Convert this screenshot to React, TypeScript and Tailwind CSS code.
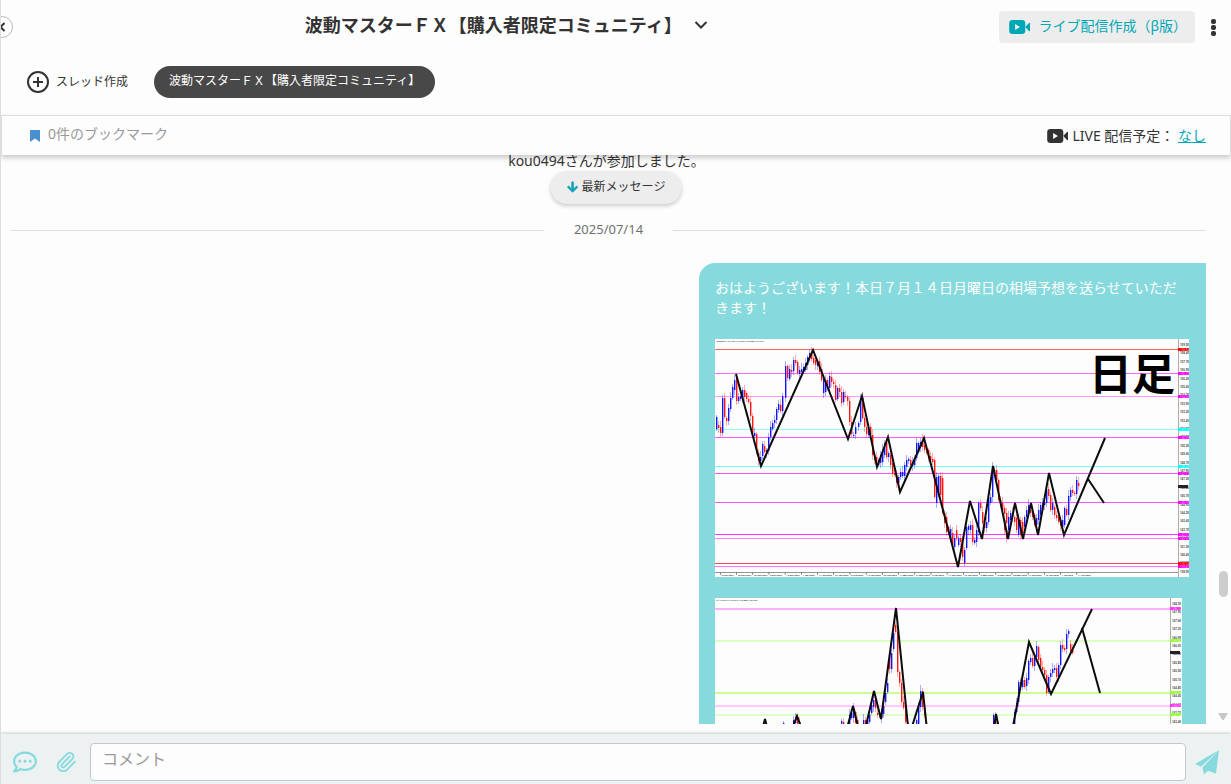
import React from "react";
import { Paperclip } from "lucide-react";
import { FaArrowDown, FaRegCommentDots } from "react-icons/fa";

type Candle = { x: number; up: boolean; top: number; bottom: number };
type Level = { y: number; color: string; tag: string };

// "b78-90" = 陽線 (青), "r86-89" = 陰線 (赤)
const parseCandles = (startX: number, data: string): Candle[] =>
  data
    .trim()
    .split(/\s+/)
    .map((item, i) => {
      const [top, bottom] = item.slice(1).split("-").map(Number);
      return { x: startX + i * 2, up: item[0] === "b", top, bottom };
    });

const dailyCandles = [
  ...parseCandles(
    1,
    `b78-90 r86-89 r88-94 b59-94 r59-78 r79-82 b69-82 b59-70 b48-59 b41-51 r39-62 b58-62
    b57-60 b51-59 r51-58 r54-60 r60-63 r63-77 r77-94 b94-97 r95-114 r114-122 b118-122 b105-117
    r107-113 b111-114 b98-112 b88-98 b84-90 b81-84 b70-81 b65-71 r66-72 b57-72`
  ),
  ...parseCandles(
    70,
    `b27-59 r27-39 b30-40 r31-33 b21-32 r21-24 r23-34 b31-35 b30-33 b28-32 b24-31 b18-26
    b14-19 r14-20 r19-24 r21-26 b22-27 r22-33 r30-41 b40-54 b41-53 r41-49 b37-49 r38-43
    r43-45 r46-61 b49-60 r49-53 r53-64 b53-63 r57-58 r58-62 r62-83 r83-95 b96-97 b88-95`
  ),
  ...parseCandles(
    143,
    `b84-88 b59-83 r59-79 r79-88 r88-95 b91-96 r88-96 r96-116 r116-121 r118-126 b121-126 b116-124
    b111-123 b104-116 r103-118 b114-118 r116-126 r124-135 r134-136 r136-144 b138-144 b133-138
    b133-137 b126-137 b121-128 b120-122 r121-126 b124-127 b119-126 b104-119 b104-113 b103-108
    r101-108 r106-111 r111-114 r111-118 r117-121 r120-123`
  ),
  ...parseCandles(
    219,
    `r121-158 b138-164 b137-154 r137-156 r139-174 r174-184 r178-193 r188-193 b190-201 r194-206
    b199-208 r191-199 b199-206 r199-203 r203-218 b211-224 b188-209 b187-191 b186-191 r186-203
    b201-204 b191-203 b164-193 r164-169 r173-184 r184-189 b183-189 b159-183 b158-164 b129-158
    r131-134 r131-141 r141-161 r161-164 r164-171 r169-175 r174-184`
  ),
  ...parseCandles(
    289,
    `r181-191 r191-199 b178-191 b174-181 r173-178 r178-183 r179-191 b181-196 r181-196 r183-194
    b178-188 b171-178 b166-173 r171-174 r174-178 r176-186 b179-186 b171-181 b166-176 b164-171
    b163-166 b151-164 r150-157 r156-171 b164-171 r168-176 r176-179 r178-183 r181-187 b181-188
    b169-186 r170-176 b157-176 b151-158 r151-154 r154-155 b141-155 r144-147`
  ),
];

const hourlyCandles = [
  ...parseCandles(68, `b125-130`),
  ...parseCandles(78, `b122-130 b121-125 r119-126 r124-130`),
  ...parseCandles(126, `b123-130 r124-130`),
  ...parseCandles(134, `b117-126 b115-120 b110-120 r114-125 r122-130`),
  ...parseCandles(
    148,
    `b122-128 r122-130 b122-130 b117-124 b107-115 b102-109 r102-110 r115-117 r115-118 b115-120
    b108-116 b95-104 b85-94 r55-71 b55-71 b35-51 r27-34 r34-74 r74-85 r85-104 r104-110 r110-124
    r124-130`
  ),
  ...parseCandles(201, `b122-130 b108-126 b93-109 r93-109 r109-117`),
  ...parseCandles(278, `b117-130 r118-130 r124-130`),
  ...parseCandles(
    299,
    `b114-130 b105-114 b84-104 r84-89 b82-89 r82-89 b80-88 b63-82 b60-64 r60-68 b59-68 b48-59
    r49-62 r60-69 r69-72 r72-77 r77-95 b79-94 b75-79 b71-75 b70-72 r70-79 b67-79 b47-67 r47-51
    r50-52 b36-51 b33-36 r46-53 r52-55`
  ),
];

const dailyLevels: Level[] = [
  { y: 10, color: "#ff6666", tag: "#ff0000" },
  { y: 34, color: "#ff66ff", tag: "#ff00ff" },
  { y: 57, color: "#ff99ff", tag: "#ff00ff" },
  { y: 90, color: "#90ffff", tag: "#00ffff" },
  { y: 98, color: "#ff55ff", tag: "#ff00ff" },
  { y: 127, color: "#70ffff", tag: "#00ffff" },
  { y: 134, color: "#ff55ff", tag: "#ff00ff" },
  { y: 163, color: "#ff55ff", tag: "#ff00ff" },
  { y: 195, color: "#ff33ff", tag: "#ff00ff" },
  { y: 199, color: "#ff80ff", tag: "#ff00ff" },
  { y: 224, color: "#ff4455", tag: "#ff0000" },
  { y: 227, color: "#ff70ff", tag: "#ff00ff" },
];

const hourlyLevels: Level[] = [
  { y: 10, color: "#ffb0ff", tag: "#ff30ff" },
  { y: 42, color: "#dcffc0", tag: "#90ff30" },
  { y: 94, color: "#c8ff90", tag: "#90ff30" },
  { y: 107, color: "#ffc8ff", tag: "#ff30ff" },
  { y: 116, color: "#dcffc8", tag: "#90ff30" },
];

const dailyDates = [
  "6 Nov 2024", "18 Nov 2024", "27 Nov 2024", "6 Dec 2024", "19 Dec 2024", "1 Jan 2025",
  "14 Jan 2025", "24 Jan 2025", "5 Feb 2025", "17 Feb 2025", "27 Feb 2025", "11 Mar 2025",
  "21 Mar 2025", "2 Apr 2025", "14 Apr 2025", "24 Apr 2025", "6 May 2025", "16 May 2025",
  "28 May 2025", "9 Jun 2025", "19 Jun 2025", "1 Jul 2025", "11 Jul 2025",
];

interface ChartProps {
  label: string;
  header: string;
  width: number;
  height: number;
  axisX: number;
  currentY: number;
  firstPrice: number;
  priceStep: number;
  levelHeight: number;
  levels: Level[];
  candles: Candle[];
  waves: string[];
  dates?: string[];
  title?: string;
}

function Chart(props: ChartProps) {
  const { width, height, axisX } = props;
  const prices = Array.from({ length: Math.floor((height - 6) / 8.4) + 1 }, (_, i) => i);

  return (
    <svg
      role="img"
      aria-label={props.label}
      width={width}
      height={height}
      viewBox={`0 0 ${width} ${height}`}
      className="block max-w-full bg-[#fdfdfd] font-[Roboto,sans-serif]"
    >
      <text x="1" y="3" fontSize="2.4" fontWeight="700" fill="#444">
        {props.header}
      </text>
      {props.levels.map((l) => (
        <rect key={l.y} x="0" y={l.y} width={axisX} height={props.levelHeight} fill={l.color} />
      ))}
      {props.candles.map((c, i) => (
        <g key={i} fill={c.up ? "#1414ff" : "#ff1414"}>
          <rect
            x={c.x}
            y={c.top - 2 - ((i * 7) % 5)}
            width="1"
            height={c.bottom - c.top + 4 + ((i * 7) % 5) + ((i * 3) % 4)}
            opacity="0.35"
          />
          <rect x={c.x} y={c.top} width="1.4" height={Math.max(c.bottom - c.top, 1)} />
        </g>
      ))}
      {props.waves.map((w) => (
        <polyline key={w} points={w} fill="none" stroke="#0c0c0c" strokeWidth="2" />
      ))}
      <rect x={axisX} y="0" width="0.6" height={height} fill="#777" />
      {prices.map((i) => (
        <text key={i} x={axisX + 2} y={7 + i * 8.4} fontSize="2.8" fontWeight="700" fill="#444">
          {(props.firstPrice - i * props.priceStep).toFixed(2)}
        </text>
      ))}
      {props.levels.map((l) => (
        <g key={l.y}>
          <rect x={axisX} y={l.y - 1} width="11" height="3" fill={l.tag} />
          <text x={axisX + 2} y={l.y + 2} fontSize="3" fill="#fff" fillOpacity="0.5">
            {(props.firstPrice - ((l.y - 6) / 8.4) * props.priceStep).toFixed(2)}
          </text>
        </g>
      ))}
      <rect x={axisX} y={props.currentY} width="10" height="3" fill="#222" />
      {props.dates && (
        <>
          <rect x="0" y="233" width={axisX} height="0.7" fill="#666" />
          {props.dates.map((d, i) => (
            <g key={d}>
              <rect x={5 + i * 16.2} y="233" width="0.7" height="3" fill="#666" />
              <text x={6.5 + i * 16.2} y="237" fontSize="2.4" fontWeight="700" fill="#333">
                {d}
              </text>
            </g>
          ))}
        </>
      )}
      {props.title && (
        <text
          x="374"
          y="51"
          fontSize="43"
          fontWeight="700"
          className="font-['Noto_Sans_CJK_JP',sans-serif]"
        >
          {props.title}
        </text>
      )}
    </svg>
  );
}

function VideoIcon() {
  return (
    <svg width="21" height="16" viewBox="0 0 21 16" fill="currentColor" aria-hidden="true">
      <path
        fillRule="evenodd"
        d="M3.500 1h9.500a3.300 3.300 0 0 1 3.300 3.300v7.400a3.300 3.300 0 0 1-3.300 3.300H3.500A3.300 3.300 0 0 1 .2 11.700V4.300A3.300 3.300 0 0 1 3.500 1Zm2.600 4v6L11 8Z"
      />
      <path d="M16.900 7.200 20 4q1-.7 1 .4v7.200q0 1.100-1 .4l-3.100-3.200Z" />
    </svg>
  );
}

export default function App() {
  const [comment, setComment] = React.useState("");

  return (
    <div className="relative flex h-screen flex-col overflow-hidden border-l border-[#dddddd] bg-[#fdfdfd] font-['Noto_Sans','Noto_Sans_CJK_JP',sans-serif] text-[#333333]">
      <button
        type="button"
        aria-label="戻る"
        className="absolute top-4 -left-2.5 flex size-[22px] items-center justify-end rounded-full border border-[#bbbbbb] bg-[#fdfdfd] pr-1.5"
      >
        <svg width="8" height="10" viewBox="0 0 8 10" fill="none" stroke="currentColor" strokeWidth="2">
          <path d="M6.500 1 2.500 5l4 4" />
        </svg>
      </button>

      <header className="shrink-0 pt-[11px] pb-[17px]">
        <div className="flex h-8 items-center">
          <button
            type="button"
            className="flex flex-1 items-center justify-center gap-3 pb-1 pl-3 text-lg leading-7 font-bold whitespace-nowrap"
          >
            波動マスターＦＸ【購入者限定コミュニティ】
            <svg width="14" height="10" viewBox="0 0 14 10" fill="none" stroke="currentColor" strokeWidth="2">
              <path d="m1.500 2 5.500 5.500L12.500 2" />
            </svg>
          </button>
          <button
            type="button"
            className="flex h-8 items-center gap-2 rounded bg-[#ededed] pr-2 pl-2.5 text-sm whitespace-nowrap text-[#00a8b5]"
          >
            <VideoIcon />
            <span className="pb-0.5">ライブ配信作成（β版）</span>
          </button>
          <button type="button" aria-label="メニュー" className="mr-[11px] ml-3 px-1">
            <svg width="5" height="17" viewBox="0 0 5 17" fill="currentColor">
              <rect x="0" y="0" width="5" height="5" rx="2" />
              <rect x="0" y="6" width="5" height="5" rx="2" />
              <rect x="0" y="12" width="5" height="5" rx="2" />
            </svg>
          </button>
        </div>
        <div className="mt-[23px] flex h-8 items-center pl-[26px] text-xs whitespace-nowrap">
          <button type="button" className="flex items-center gap-[7px]">
            <svg width="22" height="22" viewBox="0 0 22 22" fill="none" stroke="currentColor" strokeWidth="2">
              <circle cx="11" cy="11" r="10" />
              <path d="M11 6v10M6 11h10" />
            </svg>
            スレッド作成
          </button>
          <button
            type="button"
            className="ml-[26px] h-8 rounded-full bg-[#484848] px-[15px] pb-0.5 text-white"
          >
            波動マスターＦＸ【購入者限定コミュニティ】
          </button>
        </div>
      </header>

      <div className="relative z-10 flex h-10 shrink-0 items-center justify-between border border-b-0 border-[#dddddd] bg-[#fdfdfd] pr-6 pl-7 text-sm shadow-[0_3px_5px_rgba(0,0,0,0.2)]">
        <button type="button" className="flex items-center gap-2 text-[#999999]">
          <svg width="10" height="12" viewBox="0 0 10 12" fill="#4a90cf" aria-hidden="true">
            <path d="M0 0h10v12L5 8.500 0 12Z" />
          </svg>
          <span className="pb-1">0件のブックマーク</span>
        </button>
        <p className="flex items-center gap-1">
          <VideoIcon />
          <span>
            LIVE 配信予定：{" "}
            <a href="#live" className="text-[#00a8b5] underline">
              なし
            </a>
          </span>
        </p>
      </div>

      <main className="relative flex min-h-0 flex-1 flex-col">
        <div className="min-h-0 flex-1 overflow-y-auto pr-[25px] pl-2.5 [scrollbar-width:none]">
          <p className="pr-1 text-center text-sm leading-3">kou0494さんが参加しました。</p>
          <div className="mt-[52px] flex items-center text-[13px] leading-5 text-[#707070]">
            <span className="h-px flex-1 bg-[#dddddd]" />
            <time dateTime="2025-07-14" className="px-[30px] pb-0.5">
              2025/07/14
            </time>
            <span className="h-px flex-1 bg-[#dddddd]" />
          </div>

          <article className="mt-[22px] ml-auto w-[507px] max-w-full rounded-tl-2xl bg-[#86dadd] px-4 pt-[15px] pb-4">
            <p className="text-sm leading-5 text-white">
              おはようございます！本日７月１４日月曜日の相場予想を送らせていただきます！
            </p>
            <div className="mt-[21px]">
              <Chart
                label="日足チャート"
                header="Jpy,Daily 147.425 147.575 146.858 147.212"
                width={474}
                height={238}
                axisX={463}
                currentY={146}
                firstPrice={159.2}
                priceStep={0.75}
                levelHeight={1}
                levels={dailyLevels}
                candles={dailyCandles}
                dates={dailyDates}
                title="日足"
                waves={[
                  "21,35 46,127 98,11 133,100 147,57 162,128 173,98 185,153 209,99 243,228 255,162 267,200 278,127 293,200 300,164 308,200 316,164 323,196 334,134 349,196 390,99",
                  "373,140 389,164",
                ]}
              />
            </div>
            <div className="mt-[21px]">
              <Chart
                label="4時間足チャート"
                header="H4 146.913 147.012 146.858 146.933"
                width={467}
                height={238}
                axisX={455}
                currentY={53}
                firstPrice={148.3}
                priceStep={0.35}
                levelHeight={2}
                levels={hourlyLevels}
                candles={hourlyCandles}
                waves={[
                  "40,160 50,121 60,160",
                  "70,150 82,118 94,150",
                  "124,160 138,108 147,145 159,93 166,121 181,10 194,138 208,94 215,160",
                  "276,150 281,116 291,165 314,44 336,96 377,11",
                  "367,30 385,95",
                ]}
              />
            </div>
          </article>
        </div>
        <div className="h-2.5 shrink-0" />

        <button
          type="button"
          className="absolute top-4 left-1/2 flex h-[33px] -translate-x-1/2 items-center gap-[3px] rounded-full bg-[#ededed] px-4 pb-0.5 text-xs whitespace-nowrap shadow-[0_2px_4px_rgba(0,0,0,0.2)]"
        >
          <FaArrowDown className="text-[#17a2b8]" stroke="currentColor" strokeWidth="30" />
          最新メッセージ
        </button>
        <span className="absolute right-[3px] bottom-[137px] h-[26px] w-[9px] rounded-full bg-[#cdcdcd]" />
        <svg className="absolute right-[3px] bottom-3.5" width="10" height="7" viewBox="0 0 10 7" fill="#c8c8c8">
          <path d="M0 0h10L6 6.500q-1 1-2 0Z" />
        </svg>
      </main>

      <footer className="flex h-[50px] shrink-0 items-center bg-[#ecf1f2] pt-1.5 pr-3 pl-3 text-[#86dadd] shadow-[0_-1px_3px_rgba(0,0,0,0.2)]">
        <button type="button" aria-label="スタンプ">
          <FaRegCommentDots className="size-6" />
        </button>
        <button type="button" aria-label="ファイル添付" className="ml-[18px]">
          <Paperclip size={22} strokeWidth={2} />
        </button>
        <input
          type="text"
          aria-label="コメント"
          placeholder="コメント"
          value={comment}
          onChange={(e) => setComment(e.target.value)}
          className="ml-[13px] h-[38px] min-w-0 flex-1 rounded border border-[#c4c8ca] bg-[#fdfdfd] px-[11px] pb-1.5 text-base text-[#333333] outline-none placeholder:text-[#999999]"
        />
        <button type="button" aria-label="送信" className="ml-[9px]">
          <svg width="24" height="25" viewBox="0 0 24 25" fill="currentColor">
            <path d="M24 0 0 14l6 2.700Z" />
            <path d="M24 0 7.500 17.500 9 24.500l4-3.800L21 23.500Z" />
          </svg>
        </button>
      </footer>
    </div>
  );
}
